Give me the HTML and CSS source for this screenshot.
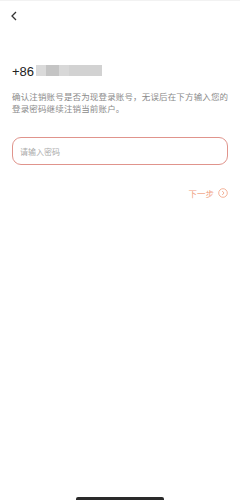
FILE: index.html
```html
<!DOCTYPE html>
<html lang="zh">
<head>
    <meta charset="UTF-8">
    <meta name="viewport" content="width=device-width, initial-scale=1.0">
    <title>注销账号</title>
    <link rel="stylesheet" href="styles.css">
</head>
<body>
    <div class="page">
        <header class="nav">
            <svg class="back" width="8" height="10" viewBox="0 0 8 10">
                <path d="M6 1 L2 5 L6 9" fill="none" stroke="#333" stroke-width="1.3"/>
            </svg>
        </header>

        <div class="phone">
            <span class="code">+86</span>
            <span class="mask">
                <i class="m1"></i><i class="m2"></i><i class="m3"></i><i class="m4"></i>
            </span>
        </div>

        <p class="tip">确认注销账号是否为现登录账号，无误后在下方输入您的登录密码继续注销当前账户。</p>

        <div class="field">
            <input type="password" placeholder="请输入密码">
        </div>

        <div class="next">
            <span>下一步</span>
            <svg width="10" height="10" viewBox="0 0 10 10">
                <circle cx="5" cy="5" r="4.3" fill="none" stroke="#f0a080" stroke-width="0.8"/>
                <path d="M4.2 3 L6 5 L4.2 7" fill="none" stroke="#f0a080" stroke-width="0.8"/>
            </svg>
        </div>
    </div>
    <div class="home-bar"></div>
</body>
</html>
```

FILE: styles.css
```css
body {
    margin: 0;
    padding: 0;
    font-family: "Noto Sans CJK SC", "Noto Sans", sans-serif;
    background: #fff;
    color: #333;
    width: 240px;
    height: 500px;
    overflow: hidden;
    position: relative;
    border-top: 1px solid #f2f2f2;
    box-sizing: border-box;
}

.page {
    padding: 0 12px;
}

.nav {
    height: 30px;
    display: flex;
    align-items: center;
}

.back {
    margin-left: -2px;
    margin-top: -1px;
}

.phone {
    margin-top: 32px;
    display: flex;
    align-items: center;
    height: 16px;
}

.code {
    font-family: "Liberation Sans", Arial, sans-serif;
    font-size: 13px;
    color: #222;
    margin-right: 2px;
}

.mask {
    display: flex;
    height: 11px;
    margin-top: -1px;
}

.mask i {
    display: block;
    height: 100%;
}

.m1 { width: 10px; background: #dadada; }
.m2 { width: 13px; background: #c4c4c4; }
.m3 { width: 10px; background: #d8d8d8; }
.m4 { width: 33px; background: #d2d2d2; }

.tip {
    margin: 11px -3px 0 0;
    font-size: 8.5px;
    line-height: 12px;
    color: #8a8a8a;
    letter-spacing: 0.15px;
}

.field {
    margin-top: 23px;
    height: 26px;
    border: 1px solid #e0948c;
    border-radius: 9px;
    display: flex;
    align-items: center;
    padding: 0 7px;
}

.field input {
    border: none;
    outline: none;
    width: 100%;
    font-family: inherit;
    font-size: 8px;
    background: transparent;
    padding: 0;
}

.field input::placeholder {
    color: #aaa;
}

.next {
    margin-top: 22px;
    display: flex;
    justify-content: flex-end;
    align-items: center;
    gap: 4px;
    color: #f0a080;
    font-size: 8.5px;
}

.home-bar {
    position: absolute;
    left: 76px;
    bottom: 0;
    width: 88px;
    height: 3px;
    background: #2a2a2a;
    border-radius: 2px 2px 0 0;
}
```
